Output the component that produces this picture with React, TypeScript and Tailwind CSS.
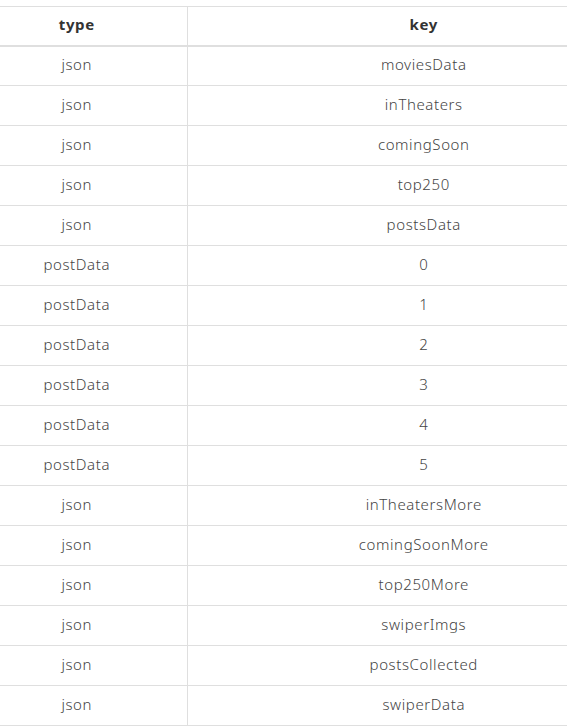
const rows: [string, string][] = [
  ["json", "moviesData"],
  ["json", "inTheaters"],
  ["json", "comingSoon"],
  ["json", "top250"],
  ["json", "postsData"],
  ["postData", "0"],
  ["postData", "1"],
  ["postData", "2"],
  ["postData", "3"],
  ["postData", "4"],
  ["postData", "5"],
  ["json", "inTheatersMore"],
  ["json", "comingSoonMore"],
  ["json", "top250More"],
  ["json", "swiperImgs"],
  ["json", "postsCollected"],
  ["json", "swiperData"],
];

export default function App() {
  return (
    <div className="bg-white pt-[6px] overflow-hidden h-[728px] font-['Noto_Sans',sans-serif] text-[15px] tracking-[0.6px]">
      <table className="ml-[-33px] w-[693px] border-collapse table-fixed">
        <colgroup>
          <col className="w-[220px]" />
          <col />
        </colgroup>
        <thead>
          <tr className="h-[39px] border-t border-b-2 border-[#dfdfdf]">
            <th className="font-bold text-[#333] text-center pb-[3px] border-r border-[#dfdfdf]">type</th>
            <th className="font-bold text-[#333] text-center pb-[3px]">key</th>
          </tr>
        </thead>
        <tbody>
          {rows.map(([t, k], i) => (
            <tr key={i} className="h-[40px] border-b border-[#dfdfdf]">
              <td className="text-center text-[#444] font-light pb-[3px] border-r border-[#dfdfdf]">{t}</td>
              <td className="text-center text-[#444] font-light pb-[3px]">{k}</td>
            </tr>
          ))}
        </tbody>
      </table>
    </div>
  );
}
